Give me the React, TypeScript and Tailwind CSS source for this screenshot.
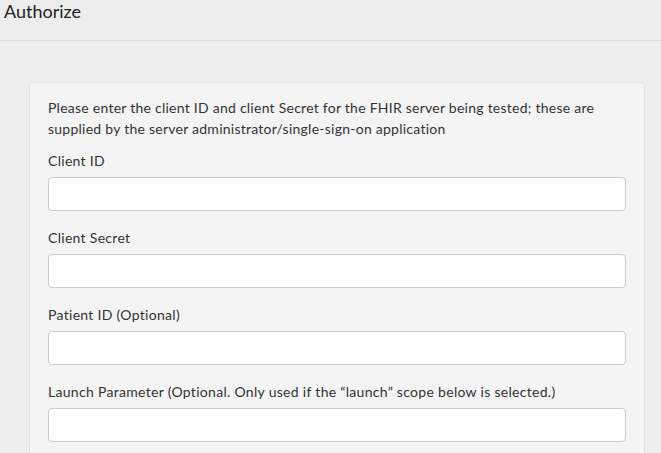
export default function App() {
  const fields = [
    "Client ID",
    "Client Secret",
    "Patient ID (Optional)",
    'Launch Parameter (Optional. Only used if the \u201Claunch\u201D scope below is selected.)',
  ];
  return (
    <div className="min-h-[453px] bg-[#ededed] text-[#333] font-['Lato',sans-serif]">
      <div className="h-[41px] border-b border-[#e0e0e0] pl-[4px] text-[18px] leading-[22px] text-[#222]">
        Authorize
      </div>
      <div className="pt-[41px] pl-[29px] pr-[16px]">
        <div className="rounded-[4px] border border-[#e3e3e3] bg-[#f4f4f4] px-[18px] pt-[14px] pb-[10px]">
          <p className="text-[14px] leading-[21px] tracking-[0.25px] mb-[11px]">
            Please enter the client ID and client Secret for the FHIR server being tested; these are supplied by the server administrator/single-sign-on application
          </p>
          {fields.map((f) => (
            <div key={f} className="mb-[16px]">
              <label className="block text-[14px] leading-[21px] tracking-[0.3px] mb-[6px]">{f}</label>
              <input className="block w-full h-[34px] rounded-[4px] border border-[#ccc] bg-white" />
            </div>
          ))}
        </div>
      </div>
    </div>
  );
}
